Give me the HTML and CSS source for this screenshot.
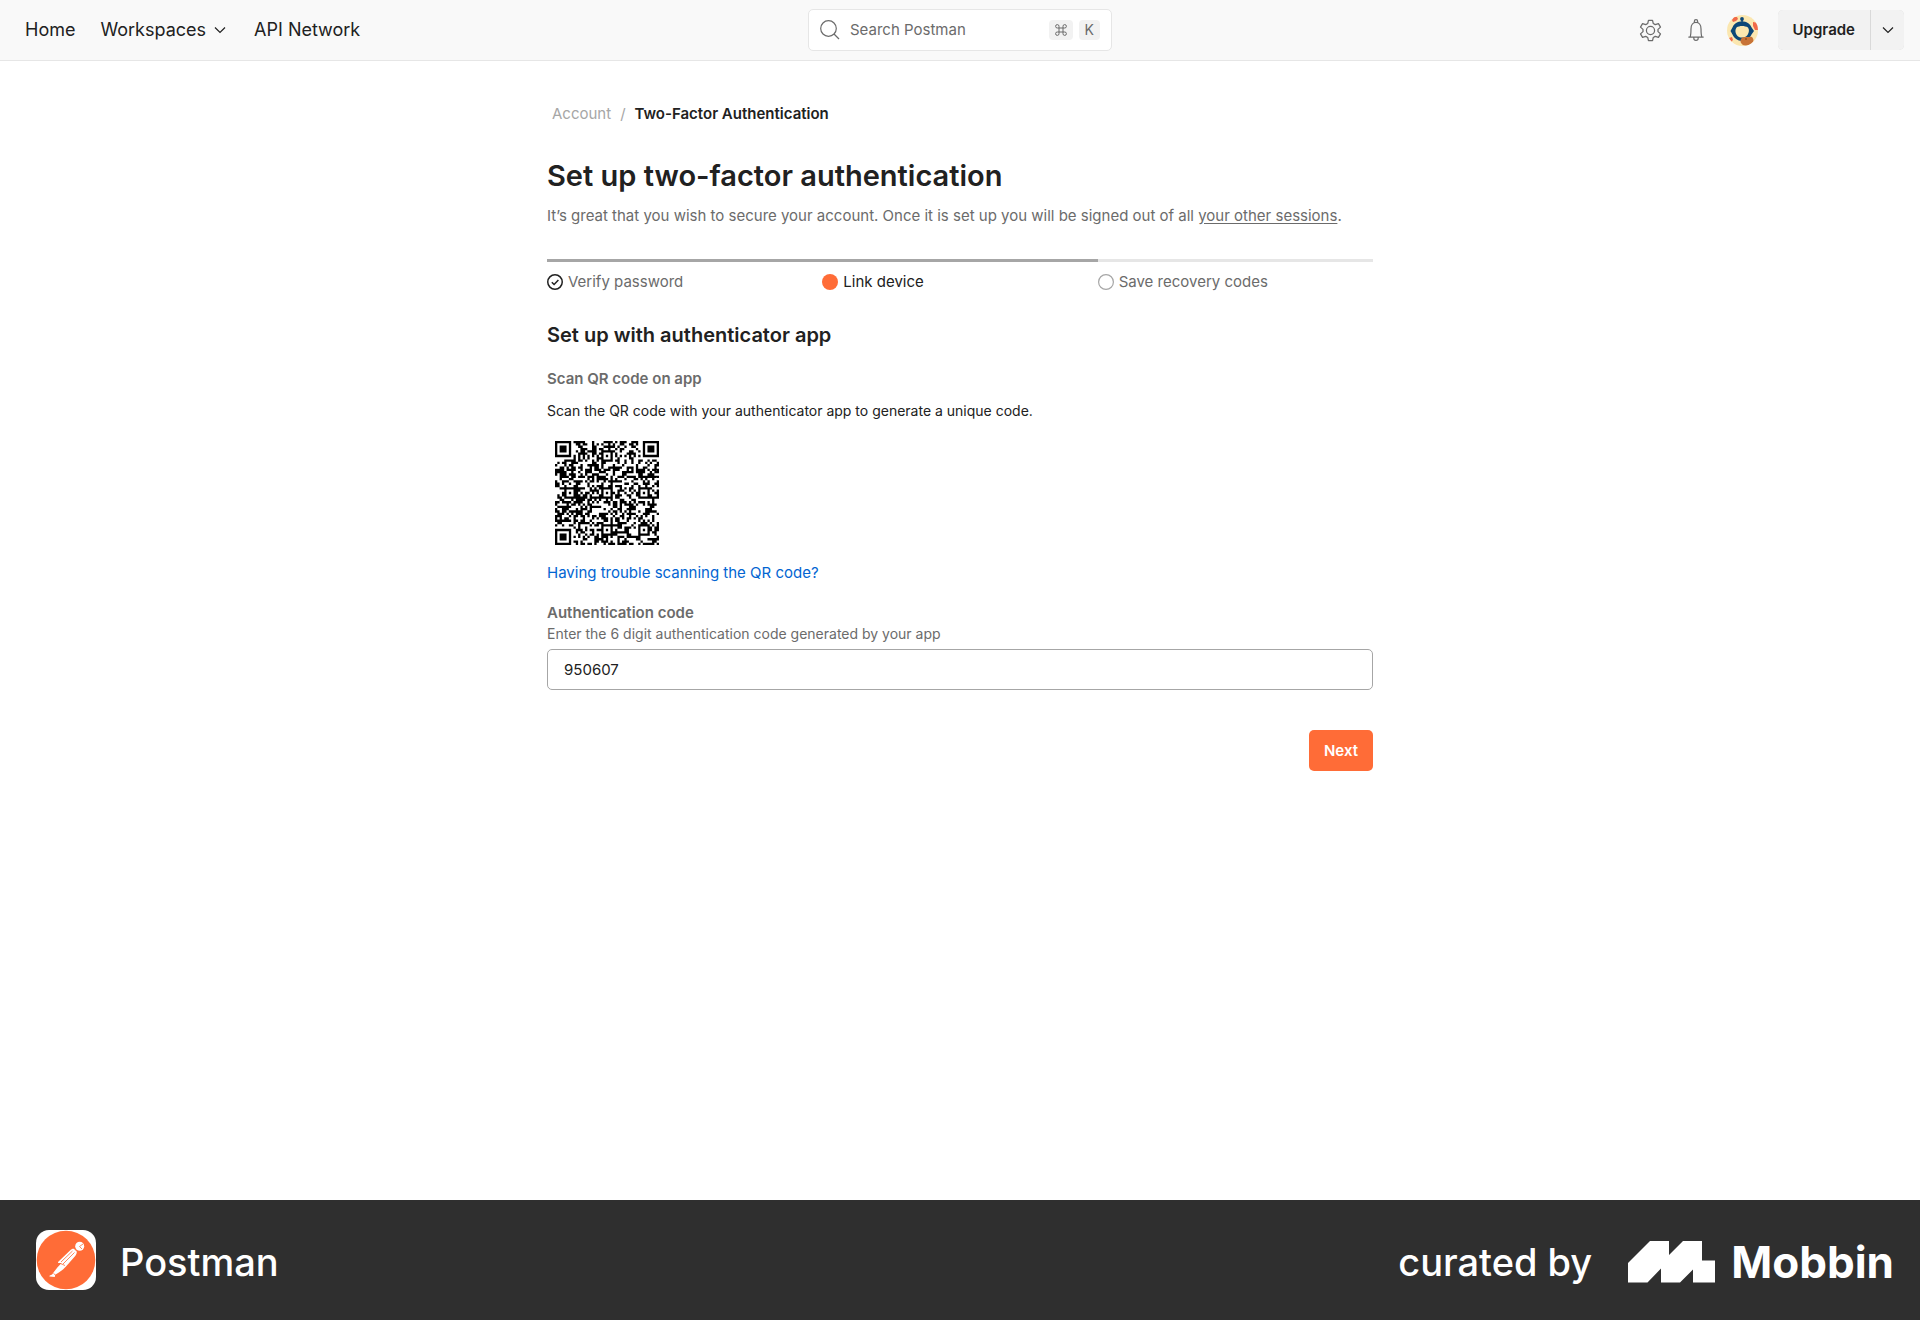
FILE: index.html
```html
<!DOCTYPE html>
<html lang="en">
<head>
<meta charset="utf-8">
<meta name="viewport" content="width=device-width, initial-scale=1">
<title>Two-Factor Authentication</title>
<link rel="stylesheet" href="styles.css">
</head>
<body>
<header class="topbar">
  <nav class="nav" aria-label="Main">
    <a class="nav-link" href="#">Home</a>
    <button class="nav-link" type="button">Workspaces
      <svg class="chevron" viewBox="0 0 12 12" width="12" height="12" aria-hidden="true"><path d="M1 3.5l5 5 5-5"/></svg>
    </button>
    <a class="nav-link" href="#">API Network</a>
  </nav>
  <label class="search">
    <svg class="search-icon" viewBox="0 0 20 20" width="20" height="20" aria-hidden="true"><circle cx="8.5" cy="8.5" r="7.8"/><path d="M14 14l5 5"/></svg>
    <input class="search-input" type="search" placeholder="Search Postman" aria-label="Search Postman">
    <kbd class="key">
      <svg class="cmd" viewBox="0 0 12 12" width="12" height="12" aria-hidden="true"><path d="M4 4V2.4A1.7 1.7 0 1 0 2.4 4h7.2A1.7 1.7 0 1 0 8 2.4v7.2A1.7 1.7 0 1 0 9.6 8H2.4A1.7 1.7 0 1 0 4 9.6z"/></svg>
    </kbd>
    <kbd class="key">K</kbd>
  </label>
  <div class="actions">
    <button class="icon-button" type="button" aria-label="Settings">
      <svg class="line-icon" viewBox="0 0 22 22" width="25" height="25" aria-hidden="true"><path d="M9.2 2h3.6l.6 2.8 1.8 1 2.8-.9 1.8 3.1-2.2 2v2l2.2 2-1.8 3.1-2.8-.9-1.800 1-.6 2.800H9.200l-.6-2.800-1.800-1-2.800.9L2.200 14l2.200-2v-2L2.200 8 4 4.900l2.800.9 1.800-1z"/><circle cx="11" cy="11" r="3.600"/></svg>
    </button>
    <button class="icon-button" type="button" aria-label="Notifications">
      <svg class="line-icon" viewBox="0 0 18 22" width="20" height="24" aria-hidden="true"><path d="M2 17.500h14M3.500 17.500c.9-1.500.9-3 .9-7.500C4.400 6.500 6.300 4 9 4s4.600 2.500 4.600 6c0 4.500 0 6 .9 7.500M7.500 4.200V3a1.500 1.500 0 0 1 3 0v1.200M7 17.500v1a2 2 0 0 0 4 0v-1"/></svg>
    </button>
    <button class="icon-button" type="button" aria-label="Profile">
      <svg viewBox="0 0 31 31" width="31" height="31" aria-hidden="true">
        <clipPath id="face"><circle cx="15.500" cy="15.500" r="15.500"/></clipPath>
        <g clip-path="url(#face)">
          <path fill="#fbe7b0" d="M0 0h31v31H0z"/>
          <path fill="#f1694a" d="M5 5l2-3 3 0 1 2-2 2-3 1zM26 7l5 1v7l-3 0-2-4zM2 23l3-1 1 3-2 2z"/>
          <circle cx="15" cy="4" r="1.900" fill="#0c4777"/>
          <path fill="#0c4777" d="M14.300 4h1.500v4h-1.500zM15 6.500c4.500 0 8 2 9.300 5.500L27 16l-2.500 3.500C23 23 19.500 26 15 26s-8-3-9.500-6.500L3.500 16l2.200-4C7 8.500 10.500 6.500 15 6.500z"/>
          <path fill="#fbe7b0" d="M9.500 12.500c3-2 8-2 11.500 0 1.500 2 1.200 5-.5 7.500-1.500 2-3.300 2.500-5.500 2.500s-4-.5-5.300-2.500c-1.700-2.500-1.700-5.500-.2-7.500z"/>
          <path fill="#c87337" d="M13.500 26c0-3 2.500-4.500 5.500-4s5.500-1.500 7 1.500-1 6-5 7-7.500-1.500-7.500-4.500z"/>
          <circle cx="19" cy="24" r=".8" fill="#713712"/>
        </g>
      </svg>
    </button>
    <div class="upgrade">
      <button class="upgrade-main" type="button">Upgrade</button>
      <button class="upgrade-more" type="button" aria-label="More upgrade options">
        <svg class="chevron" viewBox="0 0 12 12" width="12" height="12" aria-hidden="true"><path d="M1 3.500l5 5 5-5"/></svg>
      </button>
    </div>
  </div>
</header>

<main class="page">
  <nav class="crumbs" aria-label="Breadcrumb">
    <a class="crumb" href="#">Account</a><span class="slash">/</span><span class="crumb-current" aria-current="page">Two-Factor Authentication</span>
  </nav>
  <h1 class="title">Set up two-factor authentication</h1>
  <p class="intro">It’s great that you wish to secure your account. Once it is set up you will be signed out of all <a class="intro-link" href="#">your other sessions</a>.</p>

  <ol class="steps">
    <li class="step step-done">
      <svg class="step-icon" viewBox="0 0 16 16" width="16" height="16" aria-hidden="true"><circle cx="8" cy="8" r="7.250"/><path d="M4.800 8.200l2.300 2.300 4.300-4.500"/></svg>Verify password
    </li>
    <li class="step step-current" aria-current="step">
      <svg class="step-icon" viewBox="0 0 16 16" width="16" height="16" aria-hidden="true"><circle cx="8" cy="8" r="8"/></svg>Link device
    </li>
    <li class="step">
      <svg class="step-icon" viewBox="0 0 16 16" width="16" height="16" aria-hidden="true"><circle cx="8" cy="8" r="7.400"/></svg>Save recovery codes
    </li>
  </ol>

  <h2 class="subtitle">Set up with authenticator app</h2>
  <h3 class="label">Scan QR code on app</h3>
  <p class="hint">Scan the QR code with your authenticator app to generate a unique code.</p>
  <svg class="qr" id="qr" viewBox="0 0 45 45" width="104" height="104" role="img" aria-label="QR code"><path/></svg>
  <a class="help-link" href="#">Having trouble scanning the QR code?</a>

  <form class="form">
    <label class="label" for="code">Authentication code</label>
    <p class="field-help" id="code-help">Enter the 6 digit authentication code generated by your app</p>
    <input class="field" id="code" type="text" inputmode="numeric" value="950607" aria-describedby="code-help">
    <button class="next" type="submit">Next</button>
  </form>
</main>

<footer class="credit">
  <div class="brand">
    <svg viewBox="0 0 60 60" width="60" height="60" aria-hidden="true">
      <rect width="60" height="60" rx="13" fill="#fff"/>
      <circle cx="30" cy="30" r="29.300" fill="#ff6c37"/>
      <path fill="#fff" d="M22 32l12-11.500c1.500-1.500 3-2 4.500-1.500l2.200 2.200c.3 1.800-.3 3.300-1.500 4.800L30 36.500c-3 3.500-7 6-10.800 8.200l-.4 2.200-5.300-.3c-.2-.8.200-1.100.9-1.300l1.700-.7c2.800-4.300 6-8.200 9.500-11.500l-3.400-.1z"/>
      <circle cx="43.700" cy="16.200" r="4.500" fill="#fff"/>
      <path fill="none" stroke="#ff6c37" stroke-width=".8" d="M25 32l11.500-11M27 34l11.500-11.500M24.500 33.500l4.500 2M47 14l-3.500 2.500 2.500 2.500M38.300 18.700l2.700 2.700M17.500 43.500l2 1.500"/>
    </svg>
    <span class="brand-name">Postman</span>
  </div>
  <div class="curator">
    <span class="curated">curated by</span>
    <div class="mobbin">
      <svg viewBox="0 0 87 42" width="87" height="42" aria-hidden="true"><path fill="#fff" d="M0 22L22 0h19v14L55 0h19v19.500h13V41.500H65V28.500L52 41.500H33V27.500l-13.500 14H0z"/></svg>
      <span>Mobbin</span>
    </div>
  </div>
</footer>
<script src="qr.js"></script>
</body>
</html>
```
FILE: styles.css
```css
* { box-sizing: border-box; }

body {
  margin: 0;
  min-height: 100vh;
  display: flex;
  flex-direction: column;
  background: #fff;
  color: #212121;
  font: 400 15px/24px Inter, "Liberation Sans", sans-serif;
}

h1, h2, h3, p, ol { margin: 0; padding: 0; }
button, input { font: inherit; color: inherit; }
button { border: 0; padding: 0; background: none; cursor: pointer; }
svg { display: block; flex: none; }

.topbar {
  display: grid;
  grid-template-columns: 1fr 304px 1fr;
  align-items: center;
  height: 61px;
  padding: 0 16px;
  background: #f9f9f9;
  border-bottom: 1px solid #e6e6e6;
}
.nav { display: flex; gap: 25px; padding-left: 9px; }
.nav-link {
  display: flex;
  align-items: center;
  gap: 8px;
  color: #212121;
  font-size: 18px;
  text-decoration: none;
}
.chevron { fill: none; stroke: #212121; stroke-width: 1.2; }
.nav .chevron { margin-right: 3px; }

.search {
  display: flex;
  align-items: center;
  gap: 6px;
  height: 42px;
  padding: 0 11px;
  background: #fff;
  border: 1px solid #e6e6e6;
  border-radius: 5px;
}
.search-icon { fill: none; stroke: #6b6b6b; stroke-width: 1.2; }
.search-input {
  flex: 1;
  min-width: 0;
  padding: 0 0 0 4px;
  border: 0;
  outline: 0;
  background: none;
}
.search-input::placeholder { color: #6b6b6b; opacity: 1; }
.key {
  display: grid;
  place-items: center;
  min-width: 20px;
  height: 20px;
  padding: 0 6px;
  border-radius: 4px;
  background: #f2f2f2;
  color: #6b6b6b;
  font: 400 14px/20px Inter, sans-serif;
}
.cmd { fill: none; stroke: #6b6b6b; stroke-width: 1; }

.actions { display: flex; align-items: center; justify-content: flex-end; gap: 15px; }
.icon-button { display: grid; place-items: center; width: 31px; height: 31px; }
.line-icon { fill: none; stroke: #6b6b6b; stroke-width: 1.1; stroke-linejoin: round; }
.upgrade {
  display: flex;
  gap: 1px;
  height: 40px;
  margin-left: 5px;
  background: #d9d9d9;
  border-radius: 5px;
  overflow: hidden;
}
.upgrade-main { padding: 0 15px; background: #f2f2f2; font-weight: 600; }
.upgrade-more { display: grid; place-items: center; width: 33px; background: #f2f2f2; }

.page {
  flex: 1;
  display: flex;
  flex-direction: column;
  width: 100%;
  max-width: 858px;
  margin: 0 auto;
  padding: 41px 16px;
}
.crumbs { display: flex; gap: 9px; padding: 0 5px; }
.crumb, .slash { color: #a6a6a6; text-decoration: none; }
.crumb-current { font-weight: 600; }
.title { margin-top: 30px; font-size: 29px; line-height: 40px; font-weight: 600; }
.intro { margin-top: 8px; color: #6b6b6b; }
.intro-link { color: inherit; text-underline-offset: 2px; }

.steps { display: grid; grid-template-columns: repeat(3, 1fr); margin-top: 31px; list-style: none; }
.step {
  display: flex;
  align-items: center;
  gap: 5px;
  padding-top: 8px;
  border-top: 3px solid #e6e6e6;
  color: #6b6b6b;
}
.step-done, .step-current { border-color: #a6a6a6; }
.step-current { color: #212121; }
.step-icon { fill: none; stroke: #a6a6a6; stroke-width: 1.2; }
.step-done .step-icon { stroke: #212121; stroke-width: 1.5; }
.step-current .step-icon { fill: #ff6c37; stroke: none; }

.subtitle { margin-top: 27px; font-size: 20px; line-height: 28px; font-weight: 600; }
.label { color: #6b6b6b; font-size: 15px; line-height: 24px; font-weight: 600; }
.subtitle + .label { margin-top: 18px; }
.hint { margin-top: 8px; font-size: 14px; }
.qr { margin: 18px 8px 16px; }
.help-link { align-self: flex-start; color: #0265d2; text-decoration: none; }

.form { display: flex; flex-direction: column; margin-top: 16px; }
.field-help { color: #6b6b6b; font-size: 14px; line-height: 18px; }
.field {
  height: 41px;
  margin-top: 6px;
  padding: 0 16px;
  border: 1px solid #a6a6a6;
  border-radius: 5px;
  background: #fff;
}
.next {
  align-self: flex-end;
  height: 41px;
  margin-top: 40px;
  padding: 0 15px;
  border-radius: 5px;
  background: #ff6c37;
  color: #fff;
  font-weight: 600;
}

.credit {
  display: flex;
  align-items: center;
  justify-content: space-between;
  height: 120px;
  padding: 0 26px 0 36px;
  background: #2f2f2f;
  color: #fff;
  font-size: 38px;
  line-height: 48px;
  font-weight: 500;
}
.brand, .curator, .mobbin { display: flex; align-items: center; }
.brand { gap: 24px; }
.brand-name, .curator { padding-top: 4px; }
.curator { gap: 36px; }
.mobbin { gap: 16px; font-size: 44px; font-weight: 700; }
```
FILE: qr.js
```js
// Fills the QR symbol (version 7, 45 x 45 modules) as a single path.
const size = 45;
const centres = [6, 22, 38];
let seed = 950607;

function nextBit() {
  seed = (Math.imul(seed, 1664525) + 1013904223) >>> 0;
  return (seed >>> 16) & 1;
}

function ring(x, y, cx, cy) {
  return Math.max(Math.abs(x - cx), Math.abs(y - cy));
}

function moduleAt(x, y) {
  const bit = nextBit();
  for (const [cx, cy] of [[3, 3], [size - 4, 3], [3, size - 4]]) {
    const r = ring(x, y, cx, cy);
    if (r <= 4) return r !== 2 && r !== 4;
  }
  for (const cx of centres) {
    for (const cy of centres) {
      const corner = (cx === 6 && cy === 6) || (cx === 38 && cy === 6) || (cx === 6 && cy === 38);
      const r = ring(x, y, cx, cy);
      if (!corner && r <= 2) return r !== 1;
    }
  }
  if (x === 6 || y === 6) return (x + y) % 2 === 0;
  return bit === 1;
}

let d = "";
for (let y = 0; y < size; y++) {
  for (let x = 0; x < size; x++) {
    if (moduleAt(x, y)) d += `M${x} ${y}h1v1h-1z`;
  }
}
document.querySelector("#qr path").setAttribute("d", d);
```
